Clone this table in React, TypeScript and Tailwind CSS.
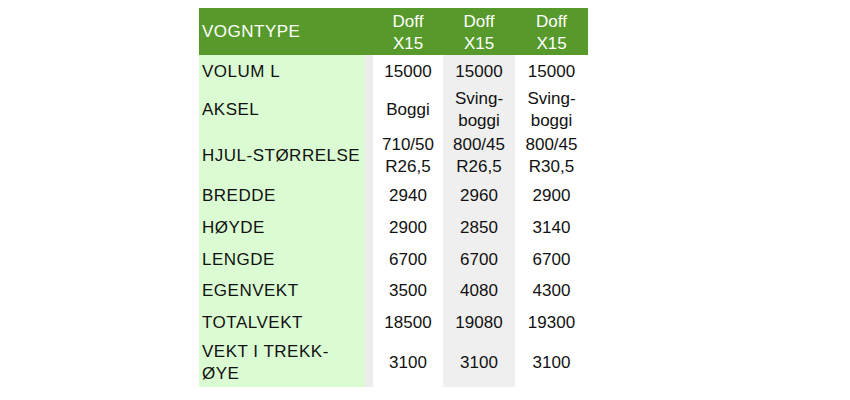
import React from "react";

type Row = {
  label: React.ReactNode;
  values: React.ReactNode[];
  h: string;
};

const rows: Row[] = [
  { label: "VOLUM L", values: ["15000", "15000", "15000"], h: "h-[33px]" },
  {
    label: "AKSEL",
    values: [
      "Boggi",
      <>Sving-<br />boggi</>,
      <>Sving-<br />boggi</>,
    ],
    h: "h-[44px]",
  },
  {
    label: "HJUL-STØRRELSE",
    values: [
      <>710/50<br />R26,5</>,
      <>800/45<br />R26,5</>,
      <>800/45<br />R30,5</>,
    ],
    h: "h-[48px]",
  },
  { label: "BREDDE", values: ["2940", "2960", "2900"], h: "h-[32px]" },
  { label: "HØYDE", values: ["2900", "2850", "3140"], h: "h-[32px]" },
  { label: "LENGDE", values: ["6700", "6700", "6700"], h: "h-[31px]" },
  { label: "EGENVEKT", values: ["3500", "4080", "4300"], h: "h-[32px]" },
  { label: "TOTALVEKT", values: ["18500", "19080", "19300"], h: "h-[32px]" },
  {
    label: <>VEKT I TREKK-<br />ØYE</>,
    values: ["3100", "3100", "3100"],
    h: "h-[48px]",
  },
];

const colBg = ["bg-white", "bg-[#efefef]", "bg-white"];

const App = () => {
  return (
    <div className="w-[850px] h-[400px] bg-white font-['Liberation_Sans',Arial,sans-serif] text-[17px] leading-[22px] text-[#111]">
      <div className="ml-[199px] pt-[8px] w-[389px]">
        {/* header */}
        <div className="grid grid-cols-[174px_70px_72px_73px] h-[47px] bg-[#579a2b] text-white">
          <div className="flex items-center pl-[3px] tracking-[0.5px]">VOGNTYPE</div>
          {[0, 1, 2].map((i) => (
            <div key={i} className="flex items-center justify-center text-center pt-[2px]">
              Doff
              <br />
              X15
            </div>
          ))}
        </div>

        {/* body */}
        {rows.map((r, idx) => (
          <div
            key={idx}
            className={`grid grid-cols-[166px_8px_70px_72px_73px] ${r.h}`}
          >
            <div className="flex items-center pl-[3px] tracking-[0.5px] bg-[#dbfcd3]">
              <div>{r.label}</div>
            </div>
            <div className="bg-[#ececec]" />
            {r.values.map((v, i) => (
              <div
                key={i}
                className={`flex items-center justify-center text-center ${colBg[i]}`}
              >
                <div>{v}</div>
              </div>
            ))}
          </div>
        ))}
      </div>
    </div>
  );
};

export default App;
